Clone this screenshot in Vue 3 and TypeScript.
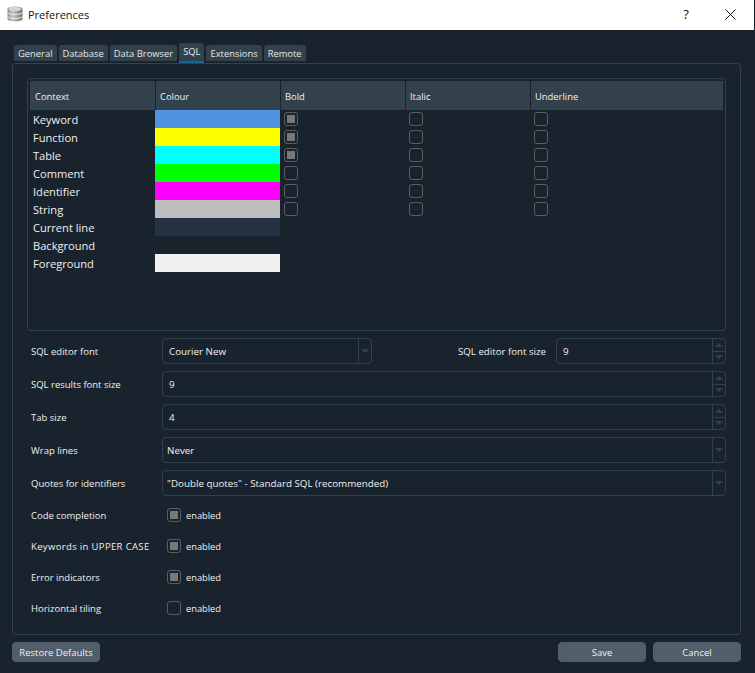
<template>
  <div class="window">
    <header class="titlebar">
      <svg class="app-icon" width="16" height="16" viewBox="0 0 16 16">
        <defs>
          <linearGradient id="dbGrad" x1="0" x2="1" y1="0" y2="0">
            <stop offset="0" stop-color="#8c8c8c" />
            <stop offset="0.35" stop-color="#c9c9c9" />
            <stop offset="1" stop-color="#6f6f6f" />
          </linearGradient>
        </defs>
        <path d="M.5 3C.5 1.500 4 .5 8 .5s7.500 1 7.500 2.500v10c0 1.500-3.500 2.500-7.500 2.500s-7.500-1-7.500-2.500z" fill="url(#dbGrad)" />
        <ellipse cx="8" cy="3" rx="6.500" ry="2" fill="#d6d6d6" />
        <path d="M.5 6.500c1.500 1.600 4.500 2 7.500 2s6-.4 7.500-2M.5 10.500c1.500 1.600 4.500 2 7.500 2s6-.4 7.500-2" fill="none" stroke="#f0f0f0" stroke-width="1" />
      </svg>
      <span class="title">Preferences</span>
      <span class="help">?</span>
      <svg class="close" width="11" height="11" viewBox="0 0 11 11">
        <path d="M.5.5l10 10M10.500.5l-10 10" stroke="#111" stroke-width="1" fill="none" />
      </svg>
    </header>

    <main class="body">
      <nav class="tabs">
        <span
          v-for="t in tabs"
          :key="t"
          class="tab"
          :class="{ 'tab--active': t === 'SQL' }"
        >{{ t }}</span>
      </nav>

      <section class="pane">
        <div class="table">
          <div class="thead">
            <span v-for="h in headers" :key="h" class="th">{{ h }}</span>
          </div>
          <div v-for="r in rows" :key="r.name" class="tr">
            <span class="td-name">{{ r.name }}</span>
            <span class="swatch" :style="{ background: r.colour }" />
            <template v-if="r.flags">
              <span v-for="(on, i) in r.flags" :key="i" class="td-check">
                <span class="check" :class="{ 'check--on': on }" />
              </span>
            </template>
          </div>
        </div>

        <div class="form">
          <div class="form-row">
            <label class="lbl">SQL editor font</label>
            <div class="field field--font">
              <span class="val">Courier New</span>
              <span class="drop"><i class="tri tri--down" /></span>
            </div>
            <label class="lbl lbl--inline">SQL editor font size</label>
            <div class="field field--grow">
              <span class="val">9</span>
              <span class="spin"><span class="spin-btn"><i class="tri tri--up" /></span><span class="spin-btn"><i class="tri tri--down" /></span></span>
            </div>
          </div>
          <div v-for="f in fields" :key="f.label" class="form-row">
            <label class="lbl">{{ f.label }}</label>
            <div class="field field--grow">
              <span class="val" :class="{ 'val--combo': f.kind === 'combo' }">{{ f.value }}</span>
              <span v-if="f.kind === 'spin'" class="spin"><span class="spin-btn"><i class="tri tri--up" /></span><span class="spin-btn"><i class="tri tri--down" /></span></span>
              <span v-else class="drop"><i class="tri tri--down" /></span>
            </div>
          </div>
        </div>

        <div class="checks">
          <div v-for="c in checks" :key="c.label" class="check-row">
            <label class="lbl" :class="{ 'lbl--caps': c.caps }">{{ c.label }}</label>
            <span class="check" :class="{ 'check--on': c.on }" />
            <span class="enabled">enabled</span>
          </div>
        </div>
      </section>

      <footer class="footer">
        <button class="btn">Restore Defaults</button>
        <span class="spacer" />
        <button class="btn">Save</button>
        <button class="btn">Cancel</button>
      </footer>
    </main>
  </div>
</template>

<script setup lang="ts">
interface Row {
  name: string
  colour: string
  flags?: boolean[]
}

const tabs = ['General', 'Database', 'Data Browser', 'SQL', 'Extensions', 'Remote']
const headers = ['Context', 'Colour', 'Bold', 'Italic', 'Underline']

const rows: Row[] = [
  { name: 'Keyword', colour: '#5292e2', flags: [true, false, false] },
  { name: 'Function', colour: '#ffff00', flags: [true, false, false] },
  { name: 'Table', colour: '#00ffff', flags: [true, false, false] },
  { name: 'Comment', colour: '#00ff00', flags: [false, false, false] },
  { name: 'Identifier', colour: '#ff00ff', flags: [false, false, false] },
  { name: 'String', colour: '#bebebe', flags: [false, false, false] },
  { name: 'Current line', colour: '#233343' },
  { name: 'Background', colour: '#19232d' },
  { name: 'Foreground', colour: '#f0f0f0' },
]

const fields = [
  { label: 'SQL results font size', value: '9', kind: 'spin' },
  { label: 'Tab size', value: '4', kind: 'spin' },
  { label: 'Wrap lines', value: 'Never', kind: 'combo' },
  { label: 'Quotes for identifiers', value: '"Double quotes" - Standard SQL (recommended)', kind: 'combo' },
]

const checks = [
  { label: 'Code completion', on: true },
  { label: 'Keywords in UPPER CASE', on: true, caps: true },
  { label: 'Error indicators', on: true },
  { label: 'Horizontal tiling', on: false },
]
</script>

<style>
html,
body {
  margin: 0;
  background: #19232d;
}
</style>

<style scoped>
.window {
  width: 755px;
  height: 673px;
  display: flex;
  flex-direction: column;
  font-family: 'Open Sans', 'Noto Sans', sans-serif;
  color: #f0f0f0;
  background: #19232d;
  overflow: hidden;
}

.titlebar {
  height: 30px;
  box-sizing: border-box;
  flex: none;
  display: flex;
  align-items: center;
  background: #fff;
  color: #111;
  padding: 0 0 2px 7px;
  margin-right: 1px;
}

.app-icon {
  flex: none;
  margin-right: 5px;
}

.title {
  font-size: 11px;
  flex: 1;
}

.help {
  font-size: 13px;
  width: 12px;
  margin-right: 33px;
  text-align: center;
}

.close {
  margin-right: 18px;
}

.body {
  flex: 1;
  display: flex;
  flex-direction: column;
  padding: 13px 14px 11px 12px;
  min-height: 0;
}

.tabs {
  display: flex;
  align-items: flex-end;
  gap: 2px;
  height: 20px;
  padding-left: 2px;
}

.tab {
  height: 16px;
  line-height: 17px;
  padding: 0 4px;
  background: #32414b;
  border-radius: 3px 3px 0 0;
  color: #e4e8ea;
  font-size: 9.4px;
  margin-bottom: 2px;
}

.tab--active {
  height: 18px;
  line-height: 18px;
  border-bottom: 2px solid #1464a0;
  margin-bottom: 0;
}

.pane {
  height: 572px;
  box-sizing: border-box;
  border: 1px solid #32414b;
  border-radius: 4px;
  padding: 14px 14px 0;
  display: flex;
  flex-direction: column;
}

.table {
  height: 253px;
  box-sizing: border-box;
  border: 1px solid #32414b;
  border-radius: 4px;
  padding: 2px;
  flex: none;
}

.thead {
  height: 29px;
  display: grid;
  grid-template-columns: 125px 125px 125px 125px 1fr;
  background: #32414b;
}

.th {
  display: flex;
  align-items: center;
  padding: 1px 0 0 4px;
  font-size: 9.4px;
  border-left: 1px solid #19232d;
}

.th:first-child {
  border-left: 0;
  padding-left: 5px;
}

.tr {
  height: 18px;
  display: grid;
  grid-template-columns: 125px 125px 125px 125px 1fr;
}

.td-name {
  font-size: 11.1px;
  line-height: 18px;
  padding: 1px 0 0 3px;
  box-sizing: border-box;
  height: 18px;
}

.swatch {
  display: block;
  height: 18px;
}

.td-check {
  padding-left: 4px;
  padding-top: 2px;
}

.check {
  display: block;
  flex: none;
  width: 14px;
  height: 14px;
  box-sizing: border-box;
  border: 1px solid #5d5d5d;
  border-radius: 3px;
}

.check--on {
  padding: 2px;
  background: #787878 content-box;
}

.form {
  display: flex;
  flex-direction: column;
  gap: 7px;
  margin-top: 7px;
}

.form-row {
  display: flex;
  align-items: center;
  height: 26px;
  padding-left: 4px;
}

.lbl {
  width: 131px;
  flex: none;
  font-size: 9.5px;
}

.lbl--caps {
  letter-spacing: 0.35px;
}

.lbl--inline {
  width: 88px;
  font-size: 9.7px;
  white-space: nowrap;
  margin-left: 86px;
  margin-right: 10px;
}

.field {
  height: 26px;
  box-sizing: border-box;
  border: 1px solid #32414b;
  border-radius: 4px;
  display: flex;
  align-items: stretch;
}

.field--font {
  width: 210px;
  flex: none;
}

.field--grow {
  flex: 1;
}

.val {
  flex: 1;
  line-height: 25px;
  padding-left: 6px;
  font-size: 9.8px;
}

.val--combo {
  padding-left: 4px;
}

.drop {
  width: 12px;
  border-left: 1px solid #32414b;
  display: flex;
  align-items: center;
  justify-content: center;
}

.spin {
  width: 12px;
  border-left: 1px solid #32414b;
  display: flex;
  flex-direction: column;
}

.spin-btn {
  flex: 1;
  display: flex;
  align-items: center;
  justify-content: center;
}

.spin-btn:first-child {
  border-bottom: 1px solid #32414b;
}

.tri {
  display: block;
  width: 0;
  height: 0;
  border-left: 4px solid transparent;
  border-right: 4px solid transparent;
}

.tri--down {
  border-top: 4px solid #32414b;
}

.tri--up {
  border-bottom: 4px solid #32414b;
}

.checks {
  display: flex;
  flex-direction: column;
  gap: 11px;
  margin-top: 9px;
}

.check-row {
  display: flex;
  align-items: center;
  height: 20px;
  padding-left: 4px;
}

.check-row .check {
  margin-left: 5px;
}

.enabled {
  margin-left: 5px;
  font-size: 9.3px;
}

.footer {
  display: flex;
  gap: 7px;
  margin-top: 7px;
}

.spacer {
  flex: 1;
}

.btn {
  width: 88px;
  height: 20px;
  padding: 0;
  border: 1px solid #505f69;
  border-radius: 4px;
  background: #505f69;
  color: #f0f0f0;
  font-family: inherit;
  font-size: 9.5px;
}
</style>
